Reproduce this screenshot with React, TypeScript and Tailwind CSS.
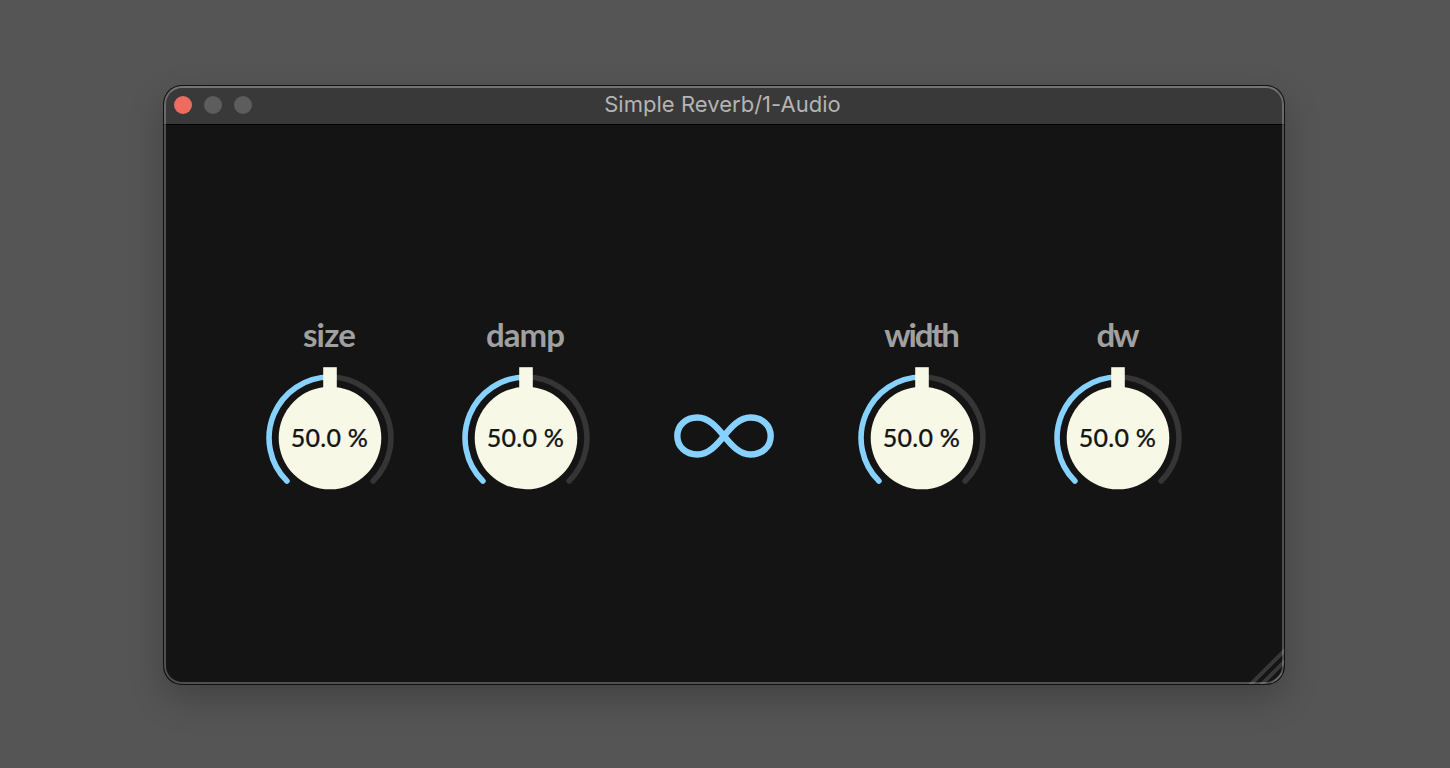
type KnobProps = { label: string; value: string; labelClass: string };

function Knob({ label, value, labelClass }: KnobProps) {
  return (
    <div className="flex w-32 flex-col items-center">
      <div className={`mr-0.5 flex h-10 items-start whitespace-nowrap font-['Lato',sans-serif] text-[33px] font-bold leading-[38px] text-[#a0a0a0] ${labelClass}`}>
        {label}
      </div>
      <div className="mt-[11px] grid h-[124px] w-32 place-items-center">
        <svg className="col-start-1 row-start-1" width="128" height="124" viewBox="0 0 128 124" fill="none">
          <path d="M64 11A61 61 0 0 1 107.1 115.1" stroke="#353535" strokeWidth="5.6" strokeLinecap="round" />
          <path d="M20.9 115.1A61 61 0 0 1 64 11" stroke="#86d1fd" strokeWidth="5.6" strokeLinecap="round" />
          <circle cx="64" cy="72" r="51.3" fill="#f7f8e6" />
          <rect x="57.2" y="1.2" width="13.6" height="24" fill="#f7f8e6" />
        </svg>
        <span className="col-start-1 row-start-1 mr-px mt-[17px] whitespace-nowrap font-['Lato',sans-serif] text-[25px] font-medium leading-8 tracking-[0.3px] text-[#151515] [-webkit-text-stroke:0.2px_#151515]">
          {value}
        </span>
      </div>
    </div>
  );
}

function InfinityMark() {
  return (
    <svg className="mt-[99px]" width="100" height="44" viewBox="0 0 100 44" fill="none">
      <path
        d="M50 22C42 12 34 3.5 23.5 3.5C11.5 3.5 3.3 11.5 3.3 22C3.3 32.5 11.5 40.5 23.5 40.5C34 40.5 42 32 50 22C58 12 66 3.5 76.5 3.5C88.5 3.5 96.7 11.5 96.7 22C96.7 32.5 88.5 40.5 76.5 40.5C66 40.5 58 32 50 22Z"
        stroke="#86d1fd"
        strokeWidth="6.4"
        strokeLinejoin="round"
      />
    </svg>
  );
}

export default function App() {
  return (
    <div className="flex h-[768px] w-[1450px] items-start justify-start bg-[#555555] pl-[164px] pt-[86px]">
      <div className="relative flex h-[598px] w-[1120px] flex-col overflow-hidden rounded-[18px] bg-[#141414] shadow-[0_0_0_1px_#111111,0_14px_36px_rgba(0,0,0,0.24)]">
        <header className="grid h-[39px] shrink-0 grid-cols-[1fr_auto_1fr] items-center border-b border-black bg-[#393939]">
          <div className="flex gap-3 pl-2.5">
            <span className="size-[18px] rounded-full bg-[#ed6b5f]" />
            <span className="size-[18px] rounded-full bg-[#5d5d5d]" />
            <span className="size-[18px] rounded-full bg-[#5d5d5d]" />
          </div>
          <h1 className="mb-0.5 mr-[3px] whitespace-nowrap font-['Inter',sans-serif] text-[22px] font-normal leading-7 tracking-[0.03px] text-[#b4b4b4]">
            Simple Reverb/1-Audio
          </h1>
        </header>
        <main className="flex pl-[102px] pt-[190px]">
          <div className="flex gap-[68px]">
            <Knob label="size" value="50.0 %" labelClass="tracking-[-0.8px]" />
            <Knob label="damp" value="50.0 %" labelClass="tracking-[-1px]" />
          </div>
          <div className="mx-[84px] w-[100px]">
            <InfinityMark />
          </div>
          <div className="flex gap-[68px]">
            <Knob label="width" value="50.0 %" labelClass="tracking-[-2.2px]" />
            <Knob label="dw" value="50.0 %" labelClass="tracking-[-2px]" />
          </div>
        </main>
        <svg className="absolute bottom-0 right-0" width="36" height="36" viewBox="0 0 36 36" stroke="#383838" strokeWidth="4">
          <path d="M1 38L38 1M12 38L38 12M23 38L38 23" />
        </svg>
        <div className="pointer-events-none absolute inset-0 rounded-[18px] border-2 border-white/25 border-t-white/30" />
      </div>
    </div>
  );
}
